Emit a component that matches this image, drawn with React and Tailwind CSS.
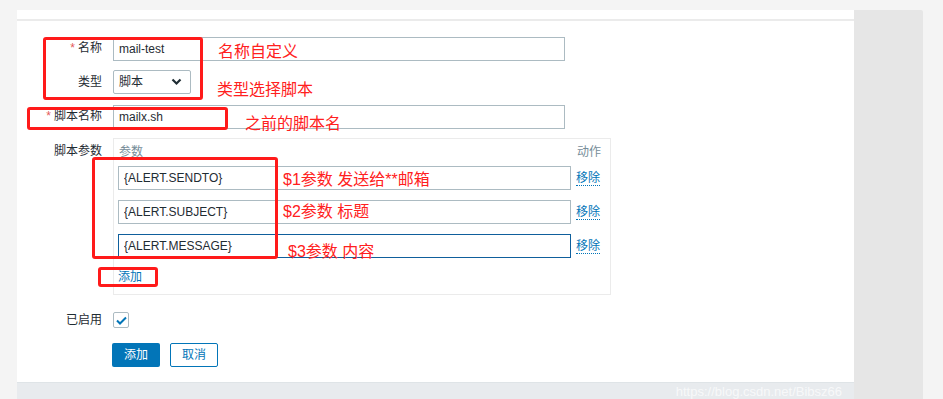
import { useState } from 'react'

const fonte = { fontFamily: '"Liberation Sans", Arial, "Noto Sans CJK SC", sans-serif' }

function Rotulo({ obrigatorio, children }) {
  return (
    <div className="w-[85px] shrink-0 text-right text-[12px] text-[#1f2c33] leading-none">
      {obrigatorio && <span className="text-[#e45959] mr-[3px]">*</span>}
      {children}
    </div>
  )
}

function Campo({ valor, foco }) {
  return (
    <input
      type="text"
      defaultValue={valor}
      className={`w-[453px] h-[24px] px-[5px] text-[12px] text-[#1f2c33] bg-white outline-none border ${foco ? 'border-[#0f5f9c]' : 'border-[#acbbc2]'}`}
      style={fonte}
    />
  )
}

export default function App() {
  const [ativo, setAtivo] = useState(true)
  const parametros = ['{ALERT.SENDTO}', '{ALERT.SUBJECT}', '{ALERT.MESSAGE}']

  return (
    <div className="relative w-[943px] h-[399px] overflow-hidden bg-[#f4f4f4] flex" style={fonte}>
      <div className="w-[17px] shrink-0" />

      {/* Coluna principal */}
      <div className="w-[837px] shrink-0 flex flex-col">
        <div className="h-[10px] shrink-0" />
        <div className="h-[373px] shrink-0 bg-white border-b border-[#dfe4e7] flex flex-col">
          <div className="h-[11px] border-b-2 border-[#ebebeb]" />

          <div className="flex flex-col pt-[15px]">
            {/* Nome */}
            <div className="flex items-center h-[24px]">
              <Rotulo obrigatorio>名称</Rotulo>
              <div className="ml-[11px]">
                <input
                  type="text"
                  defaultValue="mail-test"
                  className="w-[452px] h-[24px] px-[5px] text-[12px] text-[#1f2c33] border border-[#acbbc2] outline-none"
                  style={fonte}
                />
              </div>
            </div>

            {/* Tipo */}
            <div className="flex items-center h-[24px] mt-[10px]">
              <Rotulo>类型</Rotulo>
              <div className="ml-[11px] w-[78px] h-[24px] border border-[#acbbc2] rounded-[2px] flex items-center justify-between pl-[5px] pr-[8px] text-[12px] text-[#1f2c33]">
                <span>脚本</span>
                <svg width="11" height="8" viewBox="0 0 11 8">
                  <path d="M1.5 1.5 L5.5 5.5 L9.5 1.5" fill="none" stroke="#1f2c33" strokeWidth="2.2" />
                </svg>
              </div>
            </div>

            {/* Nome do script */}
            <div className="flex items-center h-[24px] mt-[10px]">
              <Rotulo obrigatorio>脚本名称</Rotulo>
              <div className="ml-[11px]">
                <input
                  type="text"
                  defaultValue="mailx.sh"
                  className="w-[452px] h-[24px] px-[5px] text-[12px] text-[#1f2c33] border border-[#acbbc2] outline-none"
                  style={fonte}
                />
              </div>
            </div>

            {/* Parâmetros */}
            <div className="flex items-start mt-[10px]">
              <div className="pt-[7px]">
                <Rotulo>脚本参数</Rotulo>
              </div>
              <div className="ml-[11px] w-[498px] border border-[#ebebeb] pl-[4px] pr-[9px] pb-[5px]">
                <div className="h-[27px] flex items-center justify-between text-[12px] text-[#768d99]">
                  <span className="pl-[1px] -mt-[2px]">参数</span>
                  <span className="-mt-[2px]">动作</span>
                </div>
                <div className="flex flex-col gap-[10px]">
                  {parametros.map((p, i) => (
                    <div key={p} className="flex items-center gap-[5px]">
                      <Campo valor={p} foco={i === 2} />
                      <a className="text-[12px] text-[#0275b8] border-b border-dotted border-[#0275b8] leading-[14px] cursor-pointer">移除</a>
                    </div>
                  ))}
                </div>
                <div className="h-[24px] mt-[7px] flex items-center">
                  <a className="text-[12px] text-[#0275b8] cursor-pointer">添加</a>
                </div>
              </div>
            </div>

            {/* Ativado */}
            <div className="flex items-center h-[16px] mt-[17px]">
              <Rotulo>已启用</Rotulo>
              <button
                onClick={() => setAtivo(!ativo)}
                className="ml-[11px] w-[16px] h-[16px] border border-[#acbbc2] rounded-[2px] bg-white flex items-center justify-center"
              >
                {ativo && (
                  <svg width="11" height="9" viewBox="0 0 11 9">
                    <path d="M1 4.5 L4 7.5 L10 1.5" fill="none" stroke="#0275b8" strokeWidth="2" />
                  </svg>
                )}
              </button>
            </div>

            {/* Botões */}
            <div className="flex items-center mt-[15px] pl-[95px] gap-[10px]">
              <button className="w-[48px] h-[24px] bg-[#0275b8] text-white text-[12px] rounded-[2px]">添加</button>
              <button className="w-[48px] h-[24px] bg-white border border-[#0275b8] text-[#0275b8] text-[12px] rounded-[2px]">取消</button>
            </div>
          </div>
        </div>
        <div className="flex-1 bg-[#e8ebee] flex justify-end pr-[12px]">
          <span className="text-[13px] leading-[15px] text-white/70 mt-[1px]">https://blog.csdn.net/Bibsz66</span>
        </div>
      </div>

      <div className="w-[69px] shrink-0 mt-[10px] bg-[#e6e6e6] rounded-tr-[2px]" />

      {/* Anotações */}
      <div className="absolute left-[43px] top-[37px] w-[160px] h-[63px] border-[3px] border-[#ff1a1a] rounded-[3px]" />
      <div className="absolute left-[27px] top-[107px] w-[201px] h-[23px] border-[3px] border-[#ff1a1a] rounded-[3px]" />
      <div className="absolute left-[92px] top-[157px] w-[186px] h-[102px] border-[3px] border-[#ff1a1a] rounded-[3px]" />
      <div className="absolute left-[98px] top-[267px] w-[60px] h-[20px] border-[3px] border-[#ff1a1a] rounded-[3px]" />

      <div className="absolute left-[218px] top-[41px] text-[16px] leading-[22px] text-[#ff2020]">名称自定义</div>
      <div className="absolute left-[217px] top-[79px] text-[16px] leading-[22px] text-[#ff2020]">类型选择脚本</div>
      <div className="absolute left-[245px] top-[113px] text-[16px] leading-[22px] text-[#ff2020]">之前的脚本名</div>
      <div className="absolute left-[283px] top-[169px] text-[16px] leading-[22px] text-[#ff2020]">$1参数 发送给**邮箱</div>
      <div className="absolute left-[283px] top-[201px] text-[16px] leading-[22px] text-[#ff2020]">$2参数 标题</div>
      <div className="absolute left-[288px] top-[241px] text-[16px] leading-[22px] text-[#ff2020]">$3参数 内容</div>
    </div>
  )
}
